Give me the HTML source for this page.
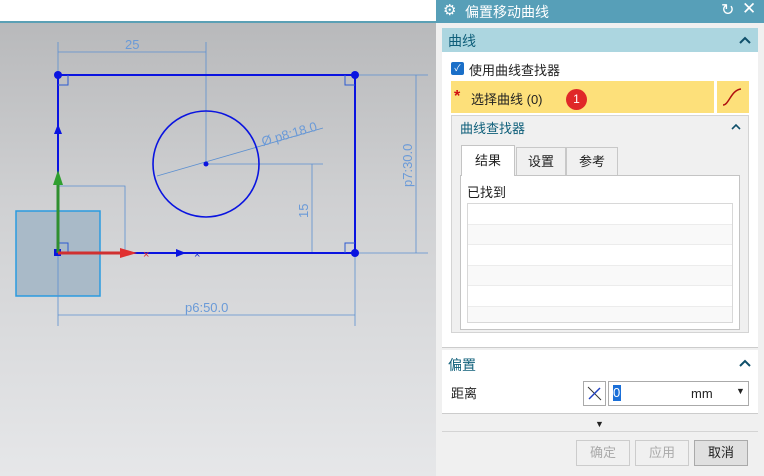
<!DOCTYPE html>
<html><head><meta charset="utf-8"><style>
*{margin:0;padding:0;box-sizing:border-box}
body{width:764px;height:476px;position:relative;overflow:hidden;font-family:"Liberation Sans","Noto Sans CJK SC",sans-serif;font-size:13px;color:#222;background:#f0f0f0}
.a{position:absolute}
</style></head><body>
<div class="a" style="left:0;top:0;width:436px;height:476px;background:linear-gradient(#b8b9bb 22px,#cfd0d2 200px,#e6e7e9 476px)"></div>
<div class="a" style="left:0;top:0;width:436px;height:21px;background:#fff"></div>
<div class="a" style="left:0;top:21px;width:436px;height:2px;background:#5aa0b5"></div>
<svg class="a" style="left:0;top:0" width="436" height="476" font-family="Liberation Sans" >
<rect x="16" y="211" width="84" height="85" fill="#a9bac8" stroke="#2a9be0" stroke-width="1.5"/>
<g stroke="#5b8fd0" stroke-width="0.8" fill="none">
<line x1="58" y1="42" x2="58" y2="326"/><line x1="206" y1="42" x2="206" y2="164"/>
<line x1="58" y1="52" x2="206" y2="52"/>
<line x1="355" y1="253" x2="355" y2="326"/><line x1="58" y1="315" x2="355" y2="315"/>
<line x1="355" y1="75" x2="428" y2="75"/><line x1="355" y1="253" x2="428" y2="253"/>
<line x1="416" y1="75" x2="416" y2="253"/>
<line x1="206" y1="164" x2="323" y2="164"/><line x1="312" y1="164" x2="312" y2="253"/>
<line x1="157" y1="176" x2="323" y2="128"/>
<polyline points="58,186 125,186 125,253"/>
<line x1="233" y1="253" x2="323" y2="253" stroke-width="2" stroke="#7a8ef0"/>
</g>
<g fill="#6a9ad8" font-size="13">
<text x="125" y="49" >25</text>
<text x="185" y="312">p6:50.0</text>
<text transform="translate(412,187) rotate(-90)">p7:30.0</text>
<text transform="translate(308,218) rotate(-90)">15</text>
<text transform="translate(263,146) rotate(-16)">Ø p8:18.0</text>
</g>
<g stroke="#0a14e0" stroke-width="2" fill="none">
<rect x="58" y="75" width="297" height="178"/>
<circle cx="206" cy="164" r="53" stroke-width="1.6"/>
</g>
<g stroke="#2d5ad0" stroke-width="1" fill="none">
<polyline points="58,85 68,85 68,75"/>
<polyline points="345,75 345,85 355,85"/>
<polyline points="58,243 68,243 68,253"/>
<polyline points="345,253 345,243 355,243"/>
</g>
<g fill="#0a14e0"><circle cx="58" cy="75" r="4"/><circle cx="355" cy="75" r="4"/><circle cx="355" cy="253" r="4"/><circle cx="206" cy="164" r="2.5"/>
<polygon points="58,124 54,134 62,134"/><polygon points="186,253 176,249 176,257"/><rect x="54" y="249" width="7" height="7"/></g>
<line x1="58" y1="253" x2="58" y2="180" stroke="#2f8f2f" stroke-width="3"/>
<polygon points="58,170 53,185 63,185" fill="#2f9f2f"/>
<line x1="58" y1="253" x2="125" y2="253" stroke="#d03030" stroke-width="3"/>
<polygon points="137,253 120,248 120,258" fill="#e03030"/>
<text x="143" y="258" fill="#e03030" font-size="11">×</text>
<text x="194" y="258" fill="#2030d0" font-size="11">×</text>
</svg>

<div class="a" style="left:436px;top:0;width:328px;height:23px;background:#579fb8;color:#fff;font-size:14px">
<span class="a" style="left:7px;top:1px;font-size:15px">⚙</span>
<span class="a" style="left:29px;top:2px">偏置移动曲线</span>
<span class="a" style="left:285px;top:0px;font-size:16px">↻</span>
<span class="a" style="left:306px;top:-1px;font-size:17px">✕</span>
</div>
<div class="a" style="left:442px;top:28px;width:316px;height:320px;background:#fff;border-bottom:1px solid #ccc"></div>
<div class="a" style="left:442px;top:28px;width:316px;height:24px;background:#acd6e0;color:#0f5f7a;font-size:14px"><span class="a" style="left:6px;top:3px">曲线</span></div>
<svg class="a" style="left:738px;top:35px" width="14" height="10"><polyline points="2,8 7,3 12,8" stroke="#0f4f6a" stroke-width="2" fill="none"/></svg>
<div class="a" style="left:451px;top:62px;width:13px;height:13px;background:#1a6fc8;border-radius:2px;color:#fff;font-size:9px;text-align:center;line-height:13px">✓</div>
<div class="a" style="left:469px;top:60px">使用曲线查找器</div>
<div class="a" style="left:451px;top:81px;width:263px;height:32px;background:#fde07a"></div>
<div class="a" style="left:717px;top:81px;width:32px;height:32px;background:#fde07a"></div>
<svg class="a" style="left:721px;top:86px" width="24" height="22"><path d="M2,19 C8,19 10,4 20,3" stroke="#b01010" stroke-width="1.5" fill="none"/></svg>
<div class="a" style="left:454px;top:88px;color:#d01010;font-size:16px;font-weight:bold">*</div>
<div class="a" style="left:471px;top:89px">选择曲线 (0)</div>
<div class="a" style="left:566px;top:89px;width:21px;height:21px;border-radius:50%;background:#e02828;color:#fff;font-size:12px;text-align:center;line-height:21px">1</div>
<div class="a" style="left:451px;top:115px;width:298px;height:218px;background:#f0f0f0;border:1px solid #d4d4d4"></div>
<div class="a" style="left:460px;top:118px;color:#0f5f7a">曲线查找器</div>
<svg class="a" style="left:730px;top:122px" width="12" height="9"><polyline points="2,7 6,3 10,7" stroke="#0f4f6a" stroke-width="1.6" fill="none"/></svg>
<div class="a" style="left:460px;top:175px;width:280px;height:155px;background:#fff;border:1px solid #c4c4c4"></div>
<div class="a" style="left:461px;top:145px;width:54px;height:31px;background:#fff;border:1px solid #c4c4c4;border-bottom:none;text-align:center;line-height:30px">结果</div>
<div class="a" style="left:516px;top:147px;width:50px;height:28px;border:1px solid #c8c8c8;border-bottom:none;text-align:center;line-height:28px">设置</div>
<div class="a" style="left:566px;top:147px;width:52px;height:28px;border:1px solid #c8c8c8;border-bottom:none;text-align:center;line-height:28px">参考</div>
<div class="a" style="left:467px;top:182px">已找到</div>
<div class="a" style="left:467px;top:203px;width:266px;height:120px;border:1px solid #d8d8d8;background:repeating-linear-gradient(#fff 0 20px,#ececec 20px 21px,#f9f9f9 21px 40px,#ececec 40px 41px)"></div>
<div class="a" style="left:442px;top:350px;width:316px;height:64px;background:#fff;border-bottom:1px solid #ccc"></div>
<div class="a" style="left:448px;top:355px;color:#0f5f7a;font-size:14px">偏置</div>
<svg class="a" style="left:738px;top:358px" width="14" height="10"><polyline points="2,8 7,3 12,8" stroke="#0f4f6a" stroke-width="2" fill="none"/></svg>
<div class="a" style="left:451px;top:383px">距离</div>
<div class="a" style="left:583px;top:381px;width:23px;height:25px;border:1px solid #aaa;background:#fff"></div>
<svg class="a" style="left:585px;top:384px" width="19" height="19"><line x1="3" y1="3" x2="16" y2="16" stroke="#333"/><line x1="4" y1="15" x2="15" y2="4" stroke="#2040c0" stroke-width="1.5"/></svg>
<div class="a" style="left:608px;top:381px;width:141px;height:25px;border:1px solid #aaa;background:#fff"></div>
<div class="a" style="left:613px;top:385px;width:8px;height:16px;background:#1a6fd8;color:#fff;font-size:13px;line-height:16px">0</div>
<div class="a" style="left:691px;top:386px">mm</div>
<div class="a" style="left:736px;top:386px;font-size:9px">▼</div>
<div class="a" style="left:595px;top:419px;font-size:9px">▼</div>
<div class="a" style="left:442px;top:431px;width:316px;height:1px;background:#d4d4d4"></div>
<div class="a" style="left:576px;top:440px;width:54px;height:26px;border:1px solid #ccc;color:#aaa;text-align:center;line-height:24px">确定</div>
<div class="a" style="left:635px;top:440px;width:54px;height:26px;border:1px solid #ccc;color:#aaa;text-align:center;line-height:24px">应用</div>
<div class="a" style="left:694px;top:440px;width:54px;height:26px;border:1px solid #aaa;background:#e0e0e0;text-align:center;line-height:24px">取消</div>
</body></html>
